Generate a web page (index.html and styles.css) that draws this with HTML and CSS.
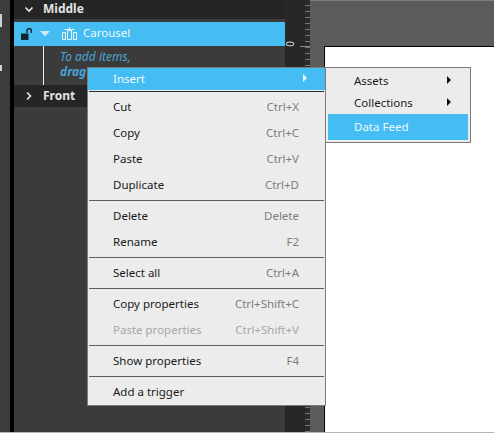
FILE: index.html
```html
<!DOCTYPE html>
<html lang="en">
<head>
<meta charset="utf-8">
<title>Layers context menu</title>
<link rel="stylesheet" href="styles.css">
</head>
<body>
<div class="app">
  <div class="rail"></div>
  <div class="divider"></div>
  <section class="panel">
    <div class="group">
      <svg class="chev" width="10" height="10" viewBox="0 0 10 10"><path d="M1.500 3.500 5 7 8.500 3.500" fill="none" stroke="#e8e8e8" stroke-width="1.600"/></svg>
      <span>Middle</span>
    </div>
    <div class="layer">
      <svg class="lock" width="12" height="12" viewBox="0 0 12 12"><path d="M0 5.500h7.500V12H0z" fill="#14232e"/><path d="M6 5V2.800a2.200 2.200 0 0 1 4.400 0V5" fill="none" stroke="#14232e" stroke-width="1.400"/></svg>
      <svg class="tri" width="10" height="6" viewBox="0 0 10 6"><path d="M0 0h10L5 5.500z" fill="#cfeafa"/></svg>
      <svg class="car" width="15" height="13" viewBox="0 0 15 13"><path d="M7.500 0v3M2.500 2.500h10" stroke="#e8f6fd" stroke-width="1" fill="none"/><path d="M.5 5.500h3v7h-3zM5.500 3.500h4v9h-4zM11.500 5.500h3v7h-3z" fill="none" stroke="#e8f6fd"/></svg>
      <span>Carousel</span>
    </div>
    <div class="hint">
      <p>To add items,</p>
      <p class="strong">drag</p>
    </div>
    <div class="group front">
      <svg class="chev" width="10" height="10" viewBox="0 0 10 10"><path d="M3 1.500 6.500 5 3 8.500" fill="none" stroke="#e8e8e8" stroke-width="1.600"/></svg>
      <span>Front</span>
    </div>
  </section>
  <div class="ruler"><span class="zero">0</span><i class="major"></i></div>
  <main class="stage"><div class="canvas"></div></main>
</div>
<div class="base-line"></div>

<div class="menu main-menu">
  <div class="item insert"><span>Insert</span><i class="arrow light"></i></div>
  <hr class="insert-sep">
  <div class="item"><span>Cut</span><kbd>Ctrl+X</kbd></div>
  <div class="item"><span>Copy</span><kbd>Ctrl+C</kbd></div>
  <div class="item"><span>Paste</span><kbd>Ctrl+V</kbd></div>
  <div class="item"><span>Duplicate</span><kbd>Ctrl+D</kbd></div>
  <hr>
  <div class="item"><span>Delete</span><kbd>Delete</kbd></div>
  <div class="item"><span>Rename</span><kbd>F2</kbd></div>
  <hr>
  <div class="item"><span>Select all</span><kbd>Ctrl+A</kbd></div>
  <hr>
  <div class="item"><span>Copy properties</span><kbd>Ctrl+Shift+C</kbd></div>
  <div class="item disabled"><span>Paste properties</span><kbd>Ctrl+Shift+V</kbd></div>
  <hr>
  <div class="item"><span>Show properties</span><kbd>F4</kbd></div>
  <hr>
  <div class="item"><span>Add a trigger</span></div>
</div>

<div class="menu sub-menu">
  <div class="sub"><span>Assets</span><i class="arrow"></i></div>
  <div class="sub"><span>Collections</span><i class="arrow"></i></div>
  <div class="sub active"><span>Data Feed</span></div>
</div>
</body>
</html>
```
FILE: styles.css
```css
* { box-sizing: border-box; }
html, body { margin: 0; height: 100%; overflow: hidden; }
body { font-family: "Noto Sans", "Open Sans", sans-serif; font-size: 11.500px; background: #3b3b3b; position: relative; }

.app { display: flex; height: 432px; }
.rail { width: 10px; background: linear-gradient(#d0d0d0, #d0d0d0) 0 14px / 2px 13px no-repeat, linear-gradient(#d0d0d0, #d0d0d0) 0 65px / 2px 6px no-repeat, #3c3c3c; }
.divider { width: 4px; background: #000; }
.panel { width: 271px; background: #3b3b3b; display: flex; flex-direction: column; }
.group { height: 19px; background: #252525; color: #e4e4e4; font-weight: 700; display: flex; align-items: center; padding: 0 0 2px 10px; gap: 9px; font-size: 12px; }
.group.front { height: 22px; padding-bottom: 1px; }
.layer { height: 24px; margin-top: 3px; background: #45bdf3; color: #eef9fe; display: flex; align-items: center; padding: 0 0 3px 7px; }
.lock { margin: 3px 7px 0 0; }
.tri { margin: 2px 12px 0 0; }
.car { margin: 1px 6px 0 0; }
.hint { height: 39px; margin-left: 29px; border-left: 1px solid #f0f0f0; padding: 3px 0 0 16px; color: #4ba3d3; font-style: italic; font-size: 12px; line-height: 15px; }
.hint p { margin: 0; }
.hint .strong { font-weight: 700; }
.ruler { width: 25px; position: relative; background: repeating-linear-gradient(to bottom, #2a2a2a 0 5px, #777 5px 6px) right top / 5px 100% no-repeat, #272727; }
.major { position: absolute; right: 0; top: 46px; width: 10px; height: 1px; background: #8a8a8a; }
.zero { position: absolute; top: 38px; left: 2px; color: #d8d8d8; font-size: 10px; line-height: 12px; transform: rotate(-90deg); }
.stage { flex: 1; background: linear-gradient(#7c7c7c, #7c7c7c) 0 0 / 100% 1px no-repeat, #5b5b5b; padding: 46px 0 0 14px; }
.canvas { height: 386px; background: #fff; border-top: 1px solid #000; border-left: 1px solid #000; }
.base-line { height: 1px; background: #b5b5b5; }

.menu { position: absolute; background: #ececec; border: 1px solid #7c7c7c; color: #1a1a1a; }
.main-menu { left: 87px; top: 67px; width: 239px; height: 339px; }
.item { height: 26px; display: flex; align-items: center; justify-content: space-between; padding: 0 26px 2px 25px; }
.item kbd { font: inherit; color: #7d7d7d; }
.item.disabled, .item.disabled kbd { color: #a6a6a6; }
.item.insert { height: 22px; background: #45bdf3; color: #f4fbff; padding: 0 18px 2px 25px; }
hr { margin: 2px 1px; height: 1px; border: 0; background: #5d5d5d; }
hr.insert-sep { margin: 1px 1px 2px; background: #222c33; }
.arrow { width: 0; height: 0; border-left: 4px solid #111; border-top: 4px solid transparent; border-bottom: 4px solid transparent; }
.arrow.light { border-left-color: #eef9fe; }

.sub-menu { left: 325px; top: 67px; width: 146px; height: 76px; padding: 2px; }
.sub { height: 22px; display: flex; align-items: center; justify-content: space-between; padding: 0 17px 2px 26px; }
.sub.active { height: 26px; background: #45bdf3; color: #eaf8ff; }
```
